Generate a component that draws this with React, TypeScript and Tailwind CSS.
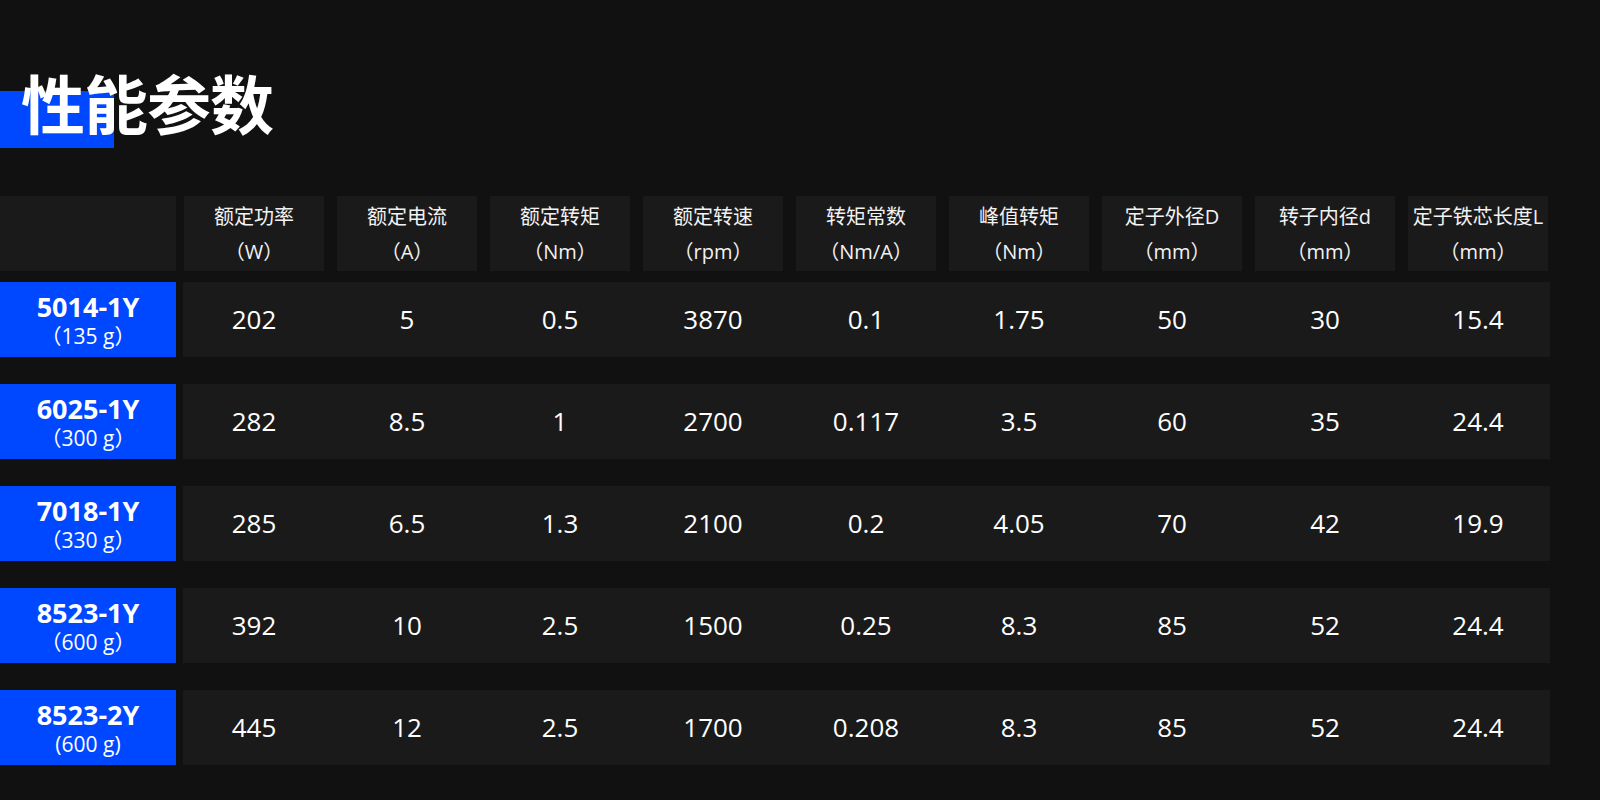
import React from 'react';

interface Motor {
  model: string;
  weight: string;
  values: string[];
}

const headers: { name: string; unit: string }[] = [
  { name: '额定功率', unit: '（W）' },
  { name: '额定电流', unit: '（A）' },
  { name: '额定转矩', unit: '（Nm）' },
  { name: '额定转速', unit: '（rpm）' },
  { name: '转矩常数', unit: '（Nm/A）' },
  { name: '峰值转矩', unit: '（Nm）' },
  { name: '定子外径D', unit: '（mm）' },
  { name: '转子内径d', unit: '（mm）' },
  { name: '定子铁芯长度L', unit: '（mm）' },
];

const motors: Motor[] = [
  { model: '5014-1Y', weight: '（135 g）', values: ['202', '5', '0.5', '3870', '0.1', '1.75', '50', '30', '15.4'] },
  { model: '6025-1Y', weight: '（300 g）', values: ['282', '8.5', '1', '2700', '0.117', '3.5', '60', '35', '24.4'] },
  { model: '7018-1Y', weight: '（330 g）', values: ['285', '6.5', '1.3', '2100', '0.2', '4.05', '70', '42', '19.9'] },
  { model: '8523-1Y', weight: '（600 g）', values: ['392', '10', '2.5', '1500', '0.25', '8.3', '85', '52', '24.4'] },
  { model: '8523-2Y', weight: '(600 g)', values: ['445', '12', '2.5', '1700', '0.208', '8.3', '85', '52', '24.4'] },
];

const font = "font-['Open_Sans','Noto_Sans_CJK_SC',sans-serif]";

export default function App() {
  return (
    <div className={`w-[1600px] h-[800px] bg-[#111111] text-white overflow-hidden ${font}`}>
      {/* Title */}
      <div className="relative pt-[69px] pl-[21px]">
        <div className="absolute left-0 top-[91px] w-[114px] h-[57px] bg-[#0048ff]" />
        <h1 className="relative text-[64px] leading-[64px] font-bold font-['Noto_Sans_CJK_SC',sans-serif] tracking-[-1px]">
          性能参数
        </h1>
      </div>

      {/* Table */}
      <div className="mt-[63px] flex flex-col">
        {/* Header row */}
        <div className="flex h-[75px] gap-[8px]">
          <div className="w-[176px] bg-[#1a1a1a]" />
          <div className="flex gap-[13px]">
            {headers.map((h) => (
              <div
                key={h.name}
                className="w-[140px] bg-[#1a1a1a] flex flex-col items-center justify-center text-[20px] leading-[35px] text-[#f2f2f2] whitespace-nowrap"
              >
                <span>{h.name}</span>
                <span>{h.unit}</span>
              </div>
            ))}
          </div>
        </div>

        {/* Data rows */}
        <div className="mt-[11px] flex flex-col gap-[27px]">
          {motors.map((m) => (
            <div key={m.model} className="flex h-[75px] gap-[7px]">
              <div className="w-[176px] bg-[#0048ff] flex flex-col items-center justify-center">
                <span className="text-[27px] leading-[32px] font-bold">{m.model}</span>
                <span className="text-[21px] leading-[26px]">{m.weight}</span>
              </div>
              <div className="flex gap-[13px] bg-[#1a1a1a] pl-[1px] pr-[2px]">
                {m.values.map((v, i) => (
                  <div
                    key={i}
                    className="w-[140px] flex items-center justify-center text-[26px]"
                  >
                    {v}
                  </div>
                ))}
              </div>
            </div>
          ))}
        </div>
      </div>
    </div>
  );
}
